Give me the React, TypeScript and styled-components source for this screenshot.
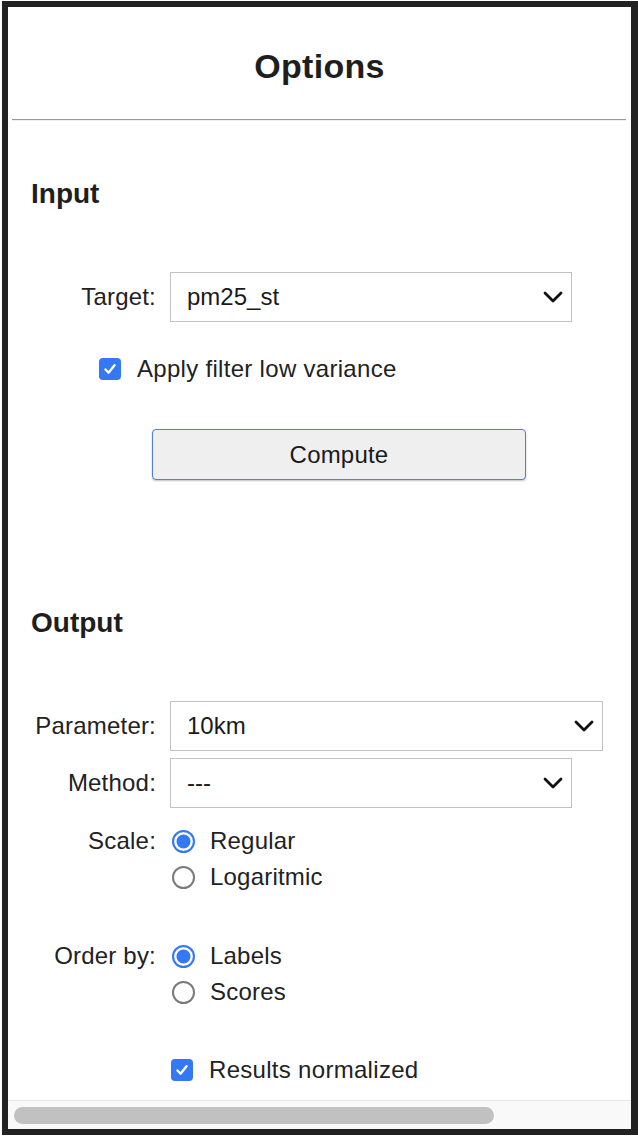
import styled, { createGlobalStyle } from 'styled-components';

const GlobalStyle = createGlobalStyle`
  html, body {
    margin: 0;
    padding: 0;
    background: #ffffff;
  }
  body {
    font-family: "Liberation Sans", Arial, sans-serif;
    color: #222222;
  }
`;

function Chevron() {
  return (
    <svg width="20" height="12" viewBox="0 0 20 12" fill="none">
      <path
        d="M2 2l8 8 8-8"
        stroke="#111"
        strokeWidth="2.8"
        strokeLinecap="round"
        strokeLinejoin="round"
      />
    </svg>
  );
}

function Check({ on }: { on: boolean }) {
  return (
    <CheckBox $on={on}>
      {on && (
        <svg width="16" height="16" viewBox="0 0 16 16" fill="none">
          <path
            d="M3.5 8.5l3 3.2 6-7.4"
            stroke="#fff"
            strokeWidth="2.4"
            strokeLinecap="round"
            strokeLinejoin="round"
          />
        </svg>
      )}
    </CheckBox>
  );
}

function Select({ value, wide }: { value: string; wide?: boolean }) {
  return (
    <SelectBox $wide={wide}>
      <span>{value}</span>
      <ChevronSlot>
        <Chevron />
      </ChevronSlot>
    </SelectBox>
  );
}

function RadioGroup({ options, selected }: { options: string[]; selected: string }) {
  return (
    <RadioList>
      {options.map((o) => (
        <RadioRow key={o}>
          <Radio $on={o === selected} />
          <span>{o}</span>
        </RadioRow>
      ))}
    </RadioList>
  );
}

export default function App() {
  return (
    <>
      <GlobalStyle />
      <Frame>
        <Body>
          <Title>Options</Title>
          <Rule />

          <Section $top={56}>Input</Section>
          <FieldGrid $top={61}>
            <Label>Target:</Label>
            <Select value="pm25_st" />
          </FieldGrid>
          <CheckRow $top={32} $indent={91}>
            <Check on />
            <span>Apply filter low variance</span>
          </CheckRow>
          <ComputeButton type="button">Compute</ComputeButton>

          <Section $top={126}>Output</Section>
          <FieldGrid $top={61}>
            <Label>Parameter:</Label>
            <Select value="10km" wide />
            <Label>Method:</Label>
            <Select value="---" />
          </FieldGrid>
          <FieldGrid $top={15}>
            <Label $radio>Scale:</Label>
            <RadioGroup options={['Regular', 'Logaritmic']} selected="Regular" />
          </FieldGrid>
          <FieldGrid $top={43}>
            <Label $radio>Order by:</Label>
            <RadioGroup options={['Labels', 'Scores']} selected="Labels" />
          </FieldGrid>
          <CheckRow $top={45} $indent={163}>
            <Check on />
            <span>Results normalized</span>
          </CheckRow>
        </Body>
        <ScrollTrack>
          <ScrollThumb />
        </ScrollTrack>
      </Frame>
    </>
  );
}

const Frame = styled.div`
  margin: 1px 0 0 2px;
  width: 623px;
  height: 1122px;
  border: 6px solid #222222;
  border-right-width: 7px;
  display: flex;
  flex-direction: column;
  background: #ffffff;
`;

const Body = styled.div`
  flex: 1;
  overflow: hidden;
  display: flex;
  flex-direction: column;
  align-items: flex-start;
`;

const Title = styled.h1`
  align-self: stretch;
  margin: 39px 0 0;
  text-align: center;
  font-size: 34px;
  line-height: 40px;
  font-weight: 700;
  letter-spacing: 0.3px;
  color: #1e1e1e;
`;

const Rule = styled.div`
  align-self: stretch;
  margin: 33px 5px 0 4px;
  height: 0;
  border-top: 1px solid #9a9a9a;
  border-bottom: 1px solid #eeeeee;
`;

const Section = styled.h2<{ $top: number }>`
  margin: ${(p) => p.$top}px 0 0 23px;
  font-size: 28px;
  line-height: 34px;
  font-weight: 700;
  color: #1e1e1e;
`;

const FieldGrid = styled.div<{ $top: number }>`
  margin-top: ${(p) => p.$top}px;
  display: grid;
  grid-template-columns: 148px auto;
  column-gap: 14px;
  row-gap: 7px;
  align-items: center;
`;

const Label = styled.div<{ $radio?: boolean }>`
  text-align: right;
  font-size: 24px;
  line-height: 36px;
  letter-spacing: 0.2px;
  align-self: ${(p) => (p.$radio ? 'start' : 'center')};
`;

const SelectBox = styled.div<{ $wide?: boolean }>`
  width: ${(p) => (p.$wide ? 433 : 402)}px;
  height: 50px;
  box-sizing: border-box;
  border: 1px solid #c2c2c2;
  background: #ffffff;
  display: flex;
  align-items: center;
  justify-content: space-between;
  padding: 0 8px 0 16px;
  font-size: 24px;
  color: #1a1a1a;
`;

const ChevronSlot = styled.span`
  display: flex;
  align-items: center;
  width: 20px;
`;

const CheckRow = styled.div<{ $top: number; $indent: number }>`
  margin: ${(p) => p.$top}px 0 0 ${(p) => p.$indent}px;
  height: 30px;
  display: flex;
  align-items: center;
  gap: 16px;
  font-size: 24px;
  letter-spacing: 0.3px;
`;

const CheckBox = styled.span<{ $on: boolean }>`
  width: 22px;
  height: 22px;
  box-sizing: border-box;
  border-radius: 4px;
  display: flex;
  align-items: center;
  justify-content: center;
  background: ${(p) => (p.$on ? '#3478f6' : '#ffffff')};
  border: ${(p) => (p.$on ? 'none' : '1.5px solid #767676')};
`;

const ComputeButton = styled.button`
  margin: 45px 0 0 144px;
  width: 374px;
  height: 51px;
  box-sizing: border-box;
  border: 1px solid #4f80d6;
  border-radius: 4px;
  background: #efefef;
  box-shadow: 0 1px 2px rgba(0, 0, 0, 0.25);
  font-family: "Liberation Sans", Arial, sans-serif;
  font-size: 24px;
  letter-spacing: 0.2px;
  color: #1a1a1a;
`;

const RadioList = styled.div`
  display: flex;
  flex-direction: column;
`;

const RadioRow = styled.div`
  height: 36px;
  display: flex;
  align-items: center;
  gap: 15px;
  padding-left: 2px;
  font-size: 24px;
  letter-spacing: 0.2px;
`;

const Radio = styled.span<{ $on: boolean }>`
  width: 23px;
  height: 23px;
  box-sizing: border-box;
  border-radius: 50%;
  background: #ffffff;
  border: ${(p) => (p.$on ? '2px solid #3478f6' : '2px solid #7a7a7a')};
  box-shadow: ${(p) => (p.$on ? 'inset 0 0 0 2.5px #ffffff, inset 0 0 0 12px #3478f6' : 'none')};
`;

const ScrollTrack = styled.div`
  height: 29px;
  flex-shrink: 0;
  box-sizing: border-box;
  border-top: 1px solid #e6e6e6;
  background: #f9f9f9;
  display: flex;
  align-items: center;
  padding-left: 6px;
`;

const ScrollThumb = styled.div`
  width: 480px;
  height: 17px;
  border-radius: 9px;
  background: #c1c1c1;
`;
